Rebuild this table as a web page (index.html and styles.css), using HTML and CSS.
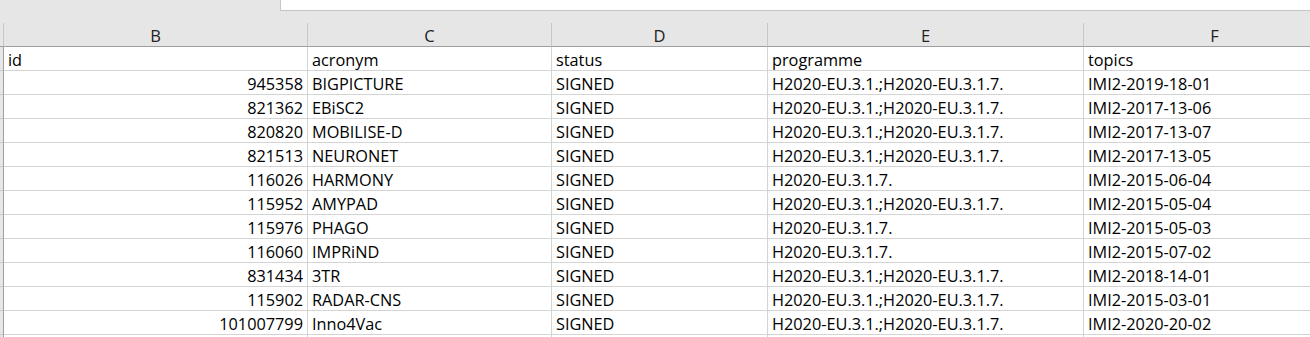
FILE: index.html
```html
<!DOCTYPE html>
<html>
<head>
<meta charset="utf-8">
<link rel="stylesheet" href="styles.css">
</head>
<body>
<div class="sheet">
  <div class="topbar">
    <div class="topgap"></div>
    <div class="namebox"></div>
  </div>
  <div class="row colhead">
    <div class="c a"></div>
    <div class="c b">B</div>
    <div class="c cc">C</div>
    <div class="c d">D</div>
    <div class="c e">E</div>
    <div class="c f">F</div>
  </div>
  <div class="row">
    <div class="c a"></div>
    <div class="c b">id</div>
    <div class="c cc">acronym</div>
    <div class="c d">status</div>
    <div class="c e">programme</div>
    <div class="c f">topics</div>
  </div>
  <div class="row"><div class="c a"></div><div class="c b num">945358</div><div class="c cc">BIGPICTURE</div><div class="c d">SIGNED</div><div class="c e">H2020-EU.3.1.;H2020-EU.3.1.7.</div><div class="c f">IMI2-2019-18-01</div></div>
  <div class="row"><div class="c a"></div><div class="c b num">821362</div><div class="c cc">EBiSC2</div><div class="c d">SIGNED</div><div class="c e">H2020-EU.3.1.;H2020-EU.3.1.7.</div><div class="c f">IMI2-2017-13-06</div></div>
  <div class="row"><div class="c a"></div><div class="c b num">820820</div><div class="c cc">MOBILISE-D</div><div class="c d">SIGNED</div><div class="c e">H2020-EU.3.1.;H2020-EU.3.1.7.</div><div class="c f">IMI2-2017-13-07</div></div>
  <div class="row"><div class="c a"></div><div class="c b num">821513</div><div class="c cc">NEURONET</div><div class="c d">SIGNED</div><div class="c e">H2020-EU.3.1.;H2020-EU.3.1.7.</div><div class="c f">IMI2-2017-13-05</div></div>
  <div class="row"><div class="c a"></div><div class="c b num">116026</div><div class="c cc">HARMONY</div><div class="c d">SIGNED</div><div class="c e">H2020-EU.3.1.7.</div><div class="c f">IMI2-2015-06-04</div></div>
  <div class="row"><div class="c a"></div><div class="c b num">115952</div><div class="c cc">AMYPAD</div><div class="c d">SIGNED</div><div class="c e">H2020-EU.3.1.;H2020-EU.3.1.7.</div><div class="c f">IMI2-2015-05-04</div></div>
  <div class="row"><div class="c a"></div><div class="c b num">115976</div><div class="c cc">PHAGO</div><div class="c d">SIGNED</div><div class="c e">H2020-EU.3.1.7.</div><div class="c f">IMI2-2015-05-03</div></div>
  <div class="row"><div class="c a"></div><div class="c b num">116060</div><div class="c cc">IMPRiND</div><div class="c d">SIGNED</div><div class="c e">H2020-EU.3.1.7.</div><div class="c f">IMI2-2015-07-02</div></div>
  <div class="row"><div class="c a"></div><div class="c b num">831434</div><div class="c cc">3TR</div><div class="c d">SIGNED</div><div class="c e">H2020-EU.3.1.;H2020-EU.3.1.7.</div><div class="c f">IMI2-2018-14-01</div></div>
  <div class="row"><div class="c a"></div><div class="c b num">115902</div><div class="c cc">RADAR-CNS</div><div class="c d">SIGNED</div><div class="c e">H2020-EU.3.1.;H2020-EU.3.1.7.</div><div class="c f">IMI2-2015-03-01</div></div>
  <div class="row"><div class="c a"></div><div class="c b num">101007799</div><div class="c cc">Inno4Vac</div><div class="c d">SIGNED</div><div class="c e">H2020-EU.3.1.;H2020-EU.3.1.7.</div><div class="c f">IMI2-2020-20-02</div></div>
  <div class="row"><div class="c a"></div><div class="c b"></div><div class="c cc"></div><div class="c d"></div><div class="c e"></div><div class="c f"></div></div>
</div>
</body>
</html>
```
FILE: styles.css
```css
html, body {
  margin: 0;
  padding: 0;
  background: #ffffff;
}
.sheet {
  width: 1310px;
  height: 337px;
  overflow: hidden;
  font-family: "Open Sans", "Liberation Sans", sans-serif;
  font-size: 16.3px;
  color: #000;
}
.topbar {
  display: flex;
  height: 23px;
  background: #e6e6e6;
}
.topgap {
  width: 280px;
}
.namebox {
  flex: 1;
  height: 10px;
  background: #ffffff;
  border-left: 1px solid #c6c6c6;
  border-bottom: 1px solid #c6c6c6;
}
.row {
  display: flex;
  height: 24px;
}
.c {
  box-sizing: border-box;
  flex: none;
  height: 24px;
  border-right: 1px solid #d4d4d4;
  border-bottom: 1px solid #d4d4d4;
  padding: 1px 4px 0;
  line-height: 24px;
  white-space: nowrap;
  overflow: hidden;
}
.a { width: 4px; padding: 0; background: #e6e6e6; border-right-color: #9e9e9e; border-bottom-color: #c6c6c6; }
.b { width: 304px; }
.cc { width: 244px; }
.d { width: 216px; }
.e { width: 316px; }
.f { width: 262px; }
.num { text-align: right; }
.colhead .c {
  background: #e6e6e6;
  border-right-color: #c6c6c6;
  border-bottom-color: #9e9e9e;
  text-align: center;
  color: #222;
  font-size: 16.5px;
}
.colhead .a { border-right-color: #c6c6c6; }
```
